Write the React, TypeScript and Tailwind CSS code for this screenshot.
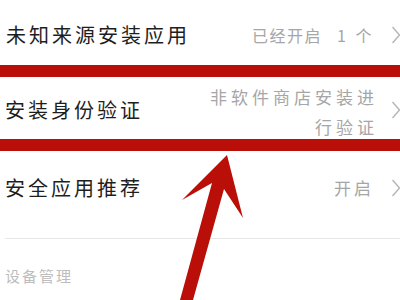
import React from "react";

const Chevron = () => (
  <svg width="8" height="18" viewBox="0 0 8 18" className="shrink-0">
    <polyline points="0.5,1 7.5,9 0.5,17" fill="none" stroke="#b5b5b5" strokeWidth="1.4" />
  </svg>
);

export default function App() {
  const font = { fontFamily: '"Noto Sans CJK SC", "Noto Sans", sans-serif' };
  return (
    <div className="relative w-[400px] h-[300px] overflow-hidden bg-white" style={font}>
      {/* Row 1 */}
      <div className="h-[65px] flex items-center justify-between pl-[6px] pt-[5px]">
        <span className="text-[20px] leading-[28px] tracking-[3px] text-[#1e1e1e]">未知来源安装应用</span>
        <div className="flex items-center">
          <span className="text-[16px] leading-[24px] tracking-[1.5px] text-[#a6a6a6] flex items-center">
            <span>已经开启</span>
            <span className="ml-[15px]">1</span>
            <span className="ml-[8px]">个</span>
          </span>
          <div className="ml-[19px]"><Chevron /></div>
        </div>
      </div>
      <div className="h-[12px] bg-[#b90f08]" />
      {/* Row 2 */}
      <div className="h-[62px] flex items-center justify-between pl-[5px] pt-[4px]">
        <span className="text-[20px] leading-[28px] tracking-[3px] text-[#1e1e1e]">安装身份验证</span>
        <div className="flex items-center">
          <div className="text-[17px] leading-[30px] tracking-[4px] text-[#a6a6a6] text-right mt-[3px]">
            <div>非软件商店安装进</div>
            <div>行验证</div>
          </div>
          <div className="ml-[14px]"><Chevron /></div>
        </div>
      </div>
      <div className="h-[12px] bg-[#b90f08]" />
      {/* Row 3 */}
      <div className="h-[87px] flex items-center justify-between pl-[5px] pb-[13px]">
        <span className="text-[20px] leading-[28px] tracking-[3px] text-[#1e1e1e]">安全应用推荐</span>
        <div className="flex items-center">
          <span className="text-[17px] leading-[24px] tracking-[3px] text-[#a6a6a6]">开启</span>
          <div className="ml-[18px]"><Chevron /></div>
        </div>
      </div>
      <div className="ml-[5px] h-px bg-[#e8e8e8]" />
      <div className="pl-[5px] pt-[24px]">
        <span className="text-[15px] leading-[20px] tracking-[2px] text-[#bdbdbd]">设备管理</span>
      </div>
      {/* Arrow annotation */}
      <svg className="absolute left-0 top-0 pointer-events-none" width="400" height="300" viewBox="0 0 400 300">
        <polygon
          points="227,155 243,218 224,189 193,300 180,300 212,183 182,200"
          fill="#b90f08"
        />
      </svg>
    </div>
  );
}
